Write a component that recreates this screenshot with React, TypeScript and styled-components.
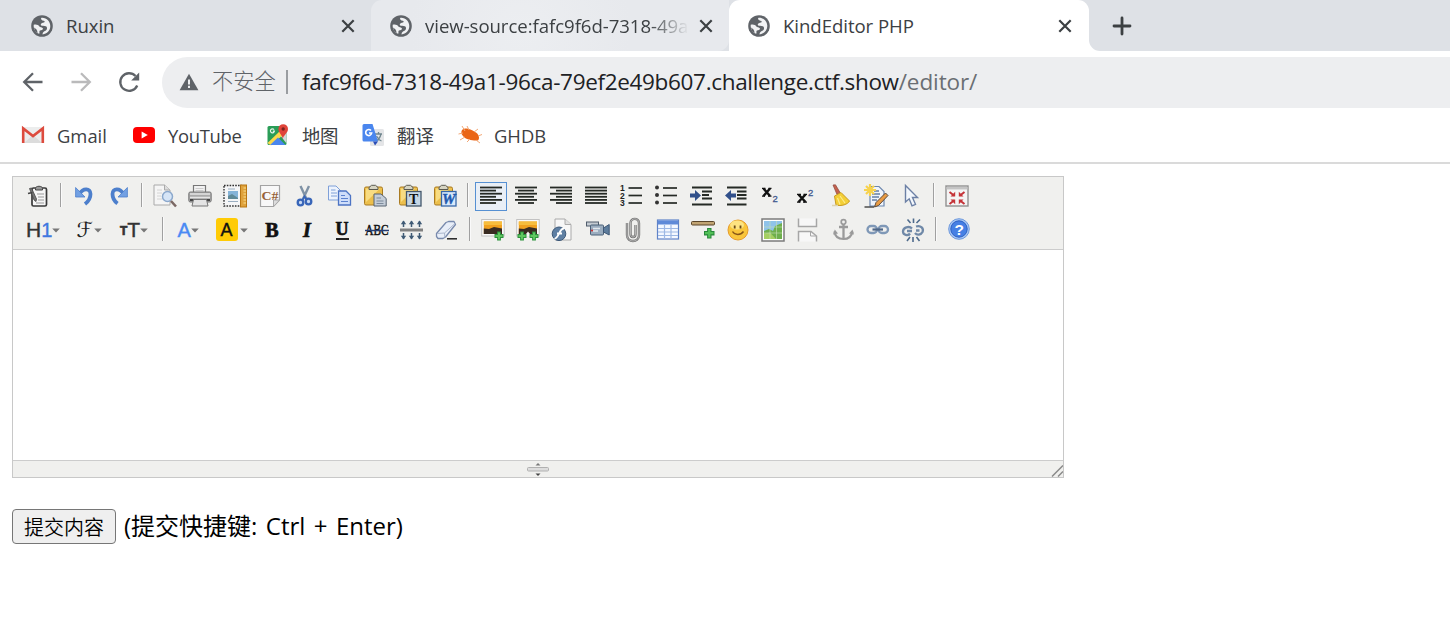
import React from 'react';
import styled, { createGlobalStyle } from 'styled-components';

const GlobalStyle = createGlobalStyle`
  * { box-sizing: border-box; }
  body { margin: 0; background: #fff; overflow: hidden; font-family: "Open Sans", "Noto Sans CJK SC", sans-serif; }
`;

const Window = styled.div`
  width: 1450px;
  height: 637px;
  background: #fff;
  overflow: hidden;
`;

/* ---------- browser chrome ---------- */

const TabStrip = styled.div`
  display: flex;
  height: 51px;
  background: #dee1e6;
`;

const Tab = styled.div<{ $w: number; $kind: 'idle' | 'hover' | 'active' }>`
  display: flex;
  align-items: center;
  width: ${p => p.$w}px;
  height: 51px;
  padding: 0 ${p => (p.$kind === 'active' ? 16 : 15)}px 0 ${p => (p.$kind === 'idle' ? 30 : 18)}px;
  border-radius: ${p => (p.$kind === 'hover' ? '11px 0 11px 0' : p.$kind === 'active' ? '11px 11px 0 0' : '0')};
  background: ${p =>
    p.$kind === 'idle'
      ? '#dee1e6'
      : p.$kind === 'hover'
        ? 'radial-gradient(circle at 150px 30px, #eceef1 0, #e7e9ed 110px)'
        : '#fff'};
`;

const TabTitle = styled.div<{ $fade?: boolean }>`
  flex: 1;
  min-width: 0;
  margin-left: 12px;
  margin-right: 9px;
  overflow: hidden;
  white-space: nowrap;
  font-size: 18.6px;
  line-height: 26px;
  letter-spacing: -0.05px;
  color: #3c4043;
  ${p => p.$fade && 'mask-image: linear-gradient(to right, #000 calc(100% - 40px), transparent);'}
`;

const NewTab = styled.div`
  display: flex;
  align-items: center;
  flex: 1;
  padding-left: 23px;
  border-radius: 0 0 0 11px;
  background: #dee1e6;
`;

const Corner = styled.div`
  flex: 1;
  display: flex;
  background: linear-gradient(#dee1e6 30px, #fff 30px);
`;

const NavBar = styled.div`
  display: flex;
  align-items: center;
  height: 62px;
  padding-left: 19px;
`;

const NavIcon = styled.span<{ $gap: number }>`
  display: flex;
  margin-right: ${p => p.$gap}px;
`;

const Omnibox = styled.div`
  display: flex;
  align-items: center;
  flex: 1;
  height: 51px;
  padding-left: 17px;
  border-radius: 26px 0 0 26px;
  background: #edeef0;
  white-space: nowrap;
`;

const NotSecure = styled.span`
  width: 74px;
  margin-left: 13px;
  font-size: 21.2px;
  line-height: 28px;
  padding-bottom: 2px;
  font-weight: 300;
  color: #5f6368;
`;

const Divider = styled.span`
  width: 2px;
  height: 24px;
  margin-right: 14px;
  background: #9a9da1;
`;

const Url = styled.span<{ $dim?: boolean; $ls: number }>`
  font-size: 22.5px;
  line-height: 30px;
  letter-spacing: ${p => p.$ls}px;
  color: ${p => (p.$dim ? '#6a6e73' : '#202124')};
`;

const BookmarkBar = styled.div`
  display: flex;
  align-items: center;
  height: 51px;
  padding: 0 0 6px 21px;
  border-bottom: 2px solid #dadada;
`;

const Bookmark = styled.div<{ $w: number; $gap: number }>`
  display: flex;
  align-items: center;
  gap: ${p => p.$gap}px;
  width: ${p => p.$w}px;
  white-space: nowrap;
`;

const BookmarkText = styled.span<{ $ls?: number }>`
  font-size: 18.4px;
  line-height: 26px;
  letter-spacing: ${p => p.$ls ?? 0}px;
  color: #3c4043;
  padding-top: 2px;
`;

/* ---------- editor ---------- */

const Page = styled.div`
  padding: 12px 0 0 12px;
`;

const Editor = styled.div`
  width: 1052px;
  height: 302px;
  border: 1px solid #c8c8c8;
  display: flex;
  flex-direction: column;
`;

const Toolbar = styled.div`
  height: 73px;
  padding: 5px 0 0 9px;
  border-bottom: 1px solid #ccc;
  background: #f0f0ee;
`;

const ToolRow = styled.div`
  display: flex;
  height: 34px;
`;

const Tool = styled.div<{ $w?: number; $on?: boolean }>`
  display: flex;
  align-items: center;
  justify-content: center;
  width: ${p => (p.$w ?? 24) + 8}px;
  height: 29px;
  margin-right: 3px;
  padding-bottom: 2px;
  border: 1px solid ${p => (p.$on ? '#5690d2' : 'transparent')};
  background: ${p => (p.$on ? '#e9eff6' : 'transparent')};
`;

const Separator = styled.div`
  width: 2px;
  height: 24px;
  margin: 1px 6px 0 3px;
  border-left: 1px solid #a0a0a0;
  border-right: 1px solid #fafafa;
`;

const Canvas = styled.div`
  flex: 1;
  background: #fff;
`;

const StatusBar = styled.div`
  display: flex;
  justify-content: center;
  align-items: center;
  position: relative;
  height: 17px;
  border-top: 1px solid #ccc;
  background: #f0f0ee;
`;

const Grip = styled.span`
  position: absolute;
  right: 0;
  bottom: 0;
  display: flex;
`;

const SubmitRow = styled.div`
  display: flex;
  align-items: center;
  margin-top: 31px;
  height: 35px;
`;

const Submit = styled.button`
  width: 104px;
  height: 35px;
  padding: 1px 0 0;
  border: 1px solid #767676;
  border-radius: 4px;
  background: #efefef;
  color: #000;
  font: 350 20px/30px "Noto Sans CJK SC", sans-serif;
`;

const Hint = styled.span`
  margin-left: 8px;
  padding-bottom: 2px;
  font-size: 24px;
  line-height: 34px;
  word-spacing: 2.2px;
  color: #000;
  white-space: nowrap;
`;

/* ---------- chrome icons ---------- */

const Globe = () => (
  <svg width="24" height="24" viewBox="-12 -12 24 24">
    <circle r="10.8" fill="#5f6368" />
    <path d="M-.5 -8.2C4.500 -8.600 8.300 -4.500 8.300 0C8.300 4.500 5 7.800 .500 8.400C.500 6.500 2 5.500 3.500 4.800C5.500 3.500 5.500 .800 3.800 .200C2.500 -.300 -.500 .300 -1.200 -1C-1.600 -2.500 .500 -3 2 -3.400C3.200 -4 2.800 -5 1.500 -5.200C.500 -5.500 -2 -6.500 -.500 -8.200Z" fill="#f1f2f4" />
    <path d="M-8.300 -1.200C-6 -2 -3.500 -1.200 -2.800 .200C-2.200 1.500 .300 1 1 2.400C1.400 3.800 -1 4.200 -2 4.400C-3.200 4.800 -2 6.500 -2.800 7.800C-6.500 6.500 -8.600 3 -8.300 -1.200Z" fill="#f1f2f4" />
    <path d="M-8 1.500C-6 2.600 -4.600 4 -4.400 7.200L-7 5Z" fill="#5f6368" />
  </svg>
);

const Close = () => (
  <svg width="16" height="16" viewBox="0 0 16 16">
    <path d="M2.300 2.300 13.700 13.700M13.700 2.300 2.300 13.700" stroke="#3c4043" strokeWidth="2.200" />
  </svg>
);

const Plus = () => (
  <svg width="20" height="20" viewBox="0 0 20 20">
    <path d="M10 2V18M2 10H18" stroke="#3c4043" strokeWidth="2.800" strokeLinecap="round" />
  </svg>
);

const Back = ({ color, flip }: { color: string; flip?: boolean }) => (
  <svg width="28" height="24" viewBox="0 0 28 24">
    <path
      d="M23.500 12H5.500M14 3.200 5.200 12 14 20.800"
      transform={flip ? 'translate(28 0) scale(-1 1)' : undefined}
      fill="none"
      stroke={color}
      strokeWidth="2.300"
    />
  </svg>
);

const Reload = () => (
  <svg width="24" height="24" viewBox="0 0 24 24">
    <path d="M20.200 15.500A8.800 8.800 0 1 1 18.500 6" fill="none" stroke="#5f6368" strokeWidth="2.300" />
    <path d="M22.200 2.500V10.500H14.200Z" fill="#5f6368" />
  </svg>
);

const Warning = () => (
  <svg width="20" height="18" viewBox="0 0 20 18">
    <path d="M10 .800 19.400 17.200H.600Z" fill="#5f6368" />
    <path d="M10 6.400V11.400M10 12.800V15" stroke="#edeef0" strokeWidth="2" />
  </svg>
);

const Gmail = () => (
  <svg width="24" height="24" viewBox="0 0 24 24">
    <rect x="1" y="4" width="22" height="16" rx="1.500" fill="#eceded" />
    <path d="M3 20 12 12 21 20Z" fill="#dcdcdc" />
    <path d="M2.200 20V5.400L12 13 21.800 5.400V20" fill="none" stroke="#dd4b3e" strokeWidth="2.600" />
  </svg>
);

const YouTube = () => (
  <svg width="24" height="24" viewBox="0 0 24 24">
    <rect x="1" y="4" width="22" height="16" rx="4" fill="#f00" />
    <path d="M9.600 8.600V15.400L15.800 12Z" fill="#fff" />
  </svg>
);

const Maps = () => (
  <svg width="24" height="24" viewBox="0 0 24 24">
    <rect x="1.500" y="3" width="19" height="19" rx="1.500" fill="#2a9d57" />
    <path d="M20.500 7V20.500L14 12Z" fill="#d5d8db" />
    <path d="M1.500 20 14 8 18 11 5 22.500Z" fill="#fbd84a" />
    <path d="M4 22 12 14.500 19.500 22Z" fill="#4a86ee" />
    <path d="M16.800 16C16.500 12 12.400 10 12.400 6A4.700 4.700 0 0 1 22 6C22 10 17.500 12 16.800 16Z" fill="#e0443a" />
    <circle cx="17.200" cy="6" r="1.700" fill="#7c2320" />
    <path d="M8 6.600A2 2 0 1 0 8.400 8.200H6.800" fill="none" stroke="#e3f3e8" strokeWidth="1.200" />
  </svg>
);

const Translate = () => (
  <svg width="24" height="24" viewBox="0 0 24 24">
    <rect x="9" y="6" width="14" height="17" rx="1.500" fill="#e4e5e7" />
    <path d="M14 11H21M17.500 9V11M20 11C19 15 17 17 15 18M15.500 13C17 16 19 17.500 20.500 18" fill="none" stroke="#70868f" strokeWidth="1.300" />
    <path d="M3 1H11.500L17 18.500H3A1.500 1.500 0 0 1 1.500 17V2.500A1.500 1.500 0 0 1 3 1Z" fill="#4a86ee" />
    <path d="M12 18.500H17L14 22.500Z" fill="#2b4db6" />
    <path d="M10 7.600A3 3 0 1 0 10.700 10H8" fill="none" stroke="#fff" strokeWidth="1.600" />
  </svg>
);

const Bug = () => (
  <svg width="24" height="24" viewBox="0 0 24 24">
    <path d="M4 7C8 4 12 6 17 9C21 11 22 15 20 17.500C16 18 8 17 5 13C3 11 3 9 4 7Z" fill="#ea6516" />
    <path d="M7 8 4 3M11 7 9 3M16 9 20 6M20 13 24 11.500M5 10 .500 11M7 14 2 17M12 16 9 19M18 17 22 20" stroke="#f3a877" strokeWidth="1" />
  </svg>
);

/* ---------- editor icons, all on a 24px grid ---------- */

const GlyphText = styled.span<{ $size: number; $color?: string; $serif?: boolean; $bold?: boolean; $italic?: boolean }>`
  font-family: ${p => (p.$serif ? '"Liberation Serif"' : '"Liberation Sans"')}, sans-serif;
  font-size: ${p => p.$size}px;
  line-height: 24px;
  font-weight: ${p => (p.$bold ? 700 : 400)};
  font-style: ${p => (p.$italic ? 'italic' : 'normal')};
  color: ${p => p.$color ?? '#333'};
  -webkit-text-stroke: ${p => (p.$bold ? 0.7 : 0.4)}px ${p => p.$color ?? '#333'};
`;

const Script = styled.span`
  font-family: "DejaVu Sans", "DejaVu Serif", serif;
  font-size: 21px;
  line-height: 24px;
  color: #222;
  margin-right: 1px;
`;

const Caret = () => (
  <svg width="8" height="5" viewBox="0 0 8 5">
    <path d="M.2 .400H7.800L4 4.600Z" fill="#777" />
  </svg>
);

const Drop = styled.span<{ $shift?: number }>`
  display: flex;
  align-items: center;
  width: 100%;
  height: 24px;
  padding-left: 3px;
  padding-right: 3px;
  margin-left: ${p => p.$shift ?? 0}px;
  white-space: nowrap;
  & > svg { flex: none; margin-top: 2px; }
`;

const Small = styled.span`
  padding-top: 3px;
  display: flex;
`;

const Highlight = styled.span`
  display: flex;
  justify-content: center;
  width: 22px;
  height: 23px;
  margin-left: 1px;
  margin-right: 2px;
  border-radius: 3px;
  background: #ffcb05;
`;

const Underlined = styled.span`
  height: 21px;
  border-bottom: 2px solid #222;
  line-height: 20px;
  display: flex;
  align-items: center;
`;

const Art = ({ children }: { children: React.ReactNode }) => (
  <svg width="24" height="24" viewBox="0 0 24 24" overflow="visible">
    {children}
  </svg>
);

const lines = (spans: [number, number][]) =>
  spans.map(([a, b], i) => <path key={i} d={`M${a} ${3.5 + i * 3.1}H${b}`} stroke="#252a25" strokeWidth="1.800" />);

const Clip = ({ children }: { children: React.ReactNode }) => (
  <Art>
    <rect x="1.500" y="3" width="18" height="18" rx="1.500" fill="#ecbf4c" stroke="#a97b22" />
    <path d="M3 18 17 4.500H3Z" fill="#f8dc82" />
    <path d="M6 5.500V3.500L8.500 1.300H12.500L15 3.500V5.500Z" fill="#d6d4c2" stroke="#5b5a50" />
    {children}
  </Art>
);

const icons: Record<string, React.ReactNode> = {
  source: (
    <Art>
      <rect x="6" y="4" width="14.500" height="18" rx="1.500" fill="#f6f6f6" stroke="#3a3a3a" strokeWidth="1.700" />
      <path d="M9.500 4.500C9.500 1.500 16.500 1.500 16.500 4.500V6H9.500Z" fill="#999" stroke="#444" />
      <path d="M11 10H18M12 13H18M12 16H18M10 19H18" stroke="#999" />
      <path d="M3.500 4.500 5.500 4 10.500 15 10 17.500 8 16Z" fill="#777" stroke="#444" strokeWidth=".800" />
      <path d="M2 9.500 6.500 8.500" stroke="#444" strokeWidth="1.600" />
    </Art>
  ),
  undo: (
    <Art>
      <path d="M7.500 10C11 3.500 18.500 4 18.500 10C18.500 13 17 17 13 20" fill="none" stroke="#4d7fcc" strokeWidth="3.800" />
      <path d="M3.600 3.500V13H13Z" fill="#72a0e3" stroke="#4d7fcc" strokeWidth=".800" />
    </Art>
  ),
  redo: (
    <Art>
      <path d="M16.500 10C13 3.500 5.500 4 5.500 10C5.500 13 7 17 10.500 19.500" fill="none" stroke="#4d7fcc" strokeWidth="3.800" />
      <path d="M20.400 3.500V13H11Z" fill="#72a0e3" stroke="#4d7fcc" strokeWidth=".800" />
    </Art>
  ),
  preview: (
    <Art>
      <path d="M1 1H11.500L17 6V21H1Z" fill="#f5f5f5" stroke="#aaa" />
      <path d="M11.500 1V6H17" fill="#ddd" stroke="#aaa" />
      <path d="M4 6H9M4 9H9M4 12H8M4 15H9" stroke="#d4d4d4" />
      <circle cx="14.500" cy="12.500" r="5" fill="#d6e5f7" stroke="#8ba8cc" strokeWidth="1.500" />
      <path d="M18 17 23 22.500" stroke="#7b6864" strokeWidth="2.600" />
    </Art>
  ),
  print: (
    <Art>
      <path d="M5.500 9V1.500H17.500V9" fill="#f2f2f2" stroke="#777" strokeWidth="1.200" />
      <path d="M7.500 4.500H15.500M7.500 6.500H15.500" stroke="#ccc" />
      <rect x=".800" y="8" width="22.400" height="10" rx="1.500" fill="#aaa" stroke="#777" />
      <path d="M2 10H22M2 13.500H22" stroke="#e4e4e4" strokeWidth="1.500" />
      <path d="M2 16H22" stroke="#444" strokeWidth="2" />
      <path d="M5.500 15.500H18.500L20 22H4Z" fill="#e4e4e4" stroke="#777" />
    </Art>
  ),
  template: (
    <Art>
      <rect x="1" y="1.500" width="17" height="20.500" fill="#f5f6f7" stroke="#333" strokeWidth="1.400" strokeDasharray="1.600 1.200" />
      <rect x="5" y="7" width="10" height="8" fill="#86b4d8" />
      <path d="M5 12 9 10 15 14V15H5Z" fill="#608a97" />
      <path d="M5 17.500H15M5 5H12" stroke="#9aaec0" />
      <rect x="17.500" y="1" width="6" height="22" fill="#dfa23c" stroke="#b87612" />
      <path d="M20.500 4H23M20.500 7H23M20.500 10H23M20.500 13H23M20.500 16H23M20.500 19H23" stroke="#fbe08f" />
    </Art>
  ),
  code: (
    <Art>
      <path d="M2.500 1.500H21.500V16L15.500 22.500H2.500Z" fill="#f8f8f8" stroke="#a3a3a3" strokeWidth="1.200" />
      <path d="M21 16H15.500V22" fill="#ddd" stroke="#aaa" />
      <text x="3.500" y="15.800" fontSize="13" fontWeight="700" fontFamily="Liberation Serif" fill="#96623a" textLength="17" lengthAdjust="spacingAndGlyphs">C#</text>
    </Art>
  ),
  cut: (
    <Art>
      <path d="M7.500 2 13.500 15M16 2 10 15" stroke="#7f92a5" strokeWidth="2.400" />
      <circle cx="7.500" cy="18.500" r="2.800" fill="#c9d9f2" stroke="#3865b8" strokeWidth="2.300" />
      <circle cx="15.500" cy="17.500" r="2.800" fill="#c9d9f2" stroke="#3865b8" strokeWidth="2.300" />
      <path d="M9.500 16 11.500 12.500 13.500 15.500" fill="none" stroke="#3865b8" strokeWidth="1.800" />
    </Art>
  ),
  copy: (
    <Art>
      <path d="M.5 2H8L12.500 6.500V16H.5Z" fill="#edf3fd" stroke="#7fa0d8" />
      <path d="M3 6H7.500M3 9H9M3 12H9" stroke="#7fa0d8" />
      <path d="M10.500 7H18L22.500 11.500V21H10.500Z" fill="#cfdefa" stroke="#4d74c4" strokeWidth="1.300" />
      <path d="M13 11.500H17M13 14.500H20M13 17.500H20" stroke="#5c82cf" strokeWidth="1.200" />
    </Art>
  ),
  paste: (
    <Clip>
      <path d="M11 10H18L23.200 14.500V22H11Z" fill="#c4cdd8" stroke="#586573" />
      <path d="M13.500 14H18M13.500 17H20.500M13.500 19.500H20.500" stroke="#7d8b9b" />
    </Clip>
  ),
  plain: (
    <Clip>
      <rect x="8.500" y="7.500" width="14.500" height="14.500" fill="#c6d7e5" stroke="#43566a" strokeWidth="1.300" />
      <text x="11" y="19.500" fontSize="14" fontWeight="700" fontFamily="Liberation Serif" fill="#111">T</text>
    </Clip>
  ),
  word: (
    <Clip>
      <rect x="8.500" y="7.500" width="14.500" height="14.500" fill="#d9e9fb" stroke="#3668aa" strokeWidth="1.300" />
      <text x="9" y="19.500" fontSize="14" fontWeight="700" fontStyle="italic" fontFamily="Liberation Serif" fill="#2159ae" stroke="#2159ae" strokeWidth=".400" textLength="13.500" lengthAdjust="spacingAndGlyphs">W</text>
    </Clip>
  ),
  left: <Art>{lines([[1, 23], [1, 17], [1, 23], [1, 17], [1, 23], [1, 17]])}</Art>,
  center: <Art>{lines([[1, 23], [4, 20], [1, 23], [4, 20], [1, 23], [4, 20]])}</Art>,
  right: <Art>{lines([[1, 23], [7, 23], [1, 23], [7, 23], [1, 23], [7, 23]])}</Art>,
  justify: <Art>{lines([[1, 23], [1, 23], [1, 23], [1, 23], [1, 23], [1, 23]])}</Art>,
  ol: (
    <Art>
      {[3.5, 11, 18.5].map((y, i) => (
        <g key={y}>
          <path d={`M9.500 ${y + 0.5}H23`} stroke="#252a25" strokeWidth="1.700" />
          <text x="1" y={y + 3.8} fontSize="8.500" fontWeight="700" fontFamily="Liberation Sans" fill="#222">{i + 1}</text>
        </g>
      ))}
    </Art>
  ),
  ul: (
    <Art>
      {[3.5, 11, 18.5].map(y => (
        <g key={y}>
          <path d={`M9 ${y + 0.5}H23`} stroke="#252a25" strokeWidth="1.700" />
          <circle cx="3" cy={y} r="2" fill="#333" />
        </g>
      ))}
    </Art>
  ),
  indent: (
    <Art>
      <path d="M3 3.500H23M13 7.500H23M13 11H20M13 14.500H23M3 20.500H23" stroke="#252a25" strokeWidth="2" />
      <path d="M1 9.500H6V6L12 11.500 6 17V13.500H1Z" fill="#31508b" />
    </Art>
  ),
  outdent: (
    <Art>
      <path d="M3 3.500H22.500M13 7.500H22.500M13 11H22.500M13 14.500H22.500M3 20.500H22.500" stroke="#252a25" strokeWidth="2" />
      <path d="M12 9.500H7V6L1 11.500 7 17V13.500H12Z" fill="#31508b" />
    </Art>
  ),
  sub: (
    <Art>
      <path d="M4.500 4.500 11 12M11 4.500 4.500 12" stroke="#111" strokeWidth="2.500" />
      <path d="M3 4.300H6.500M9.500 4.300H12.500M3 12.200H6M9 12.200H12.500" stroke="#111" strokeWidth="1.200" />
      <text x="13.500" y="18" fontSize="9.500" fontFamily="Liberation Sans" fill="#41598f" stroke="#41598f" strokeWidth=".300">2</text>
    </Art>
  ),
  sup: (
    <Art>
      <path d="M4.500 10.500 11.500 18M11.500 10.500 4.500 18" stroke="#111" strokeWidth="2.500" />
      <path d="M3 10.300H7M9.500 10.300H13M3 18.200H6.500M9 18.200H13" stroke="#111" strokeWidth="1.200" />
      <text x="14" y="11.500" fontSize="9.500" fontFamily="Liberation Sans" fill="#41598f" stroke="#41598f" strokeWidth=".300">2</text>
    </Art>
  ),
  broom: (
    <Art>
      <path d="M4 1 6.500 .800 11 8.500 8 10.500Z" fill="#c4624e" stroke="#8d463b" strokeWidth=".700" />
      <path d="M5.500 12 12 8.500 20.500 17C19 20.500 12 22.500 7 21Z" fill="#f3cf37" stroke="#c99b1f" />
      <path d="M8.500 14 11 20.500M11 12 16 19" stroke="#fdeb8b" strokeWidth="1.200" />
      <path d="M3 21.500H9" stroke="#ddd3b0" strokeWidth="1.500" />
    </Art>
  ),
  quick: (
    <Art>
      <path d="M6 2.500H15L20 7.500V22H6Z" fill="#eff4fb" stroke="#6d87ae" strokeWidth="1.200" />
      <path d="M8 10H16M8 13H15M8 16H13M10 7H15" stroke="#647da5" strokeWidth="1.300" />
      <path d="M6 0V12M0 6H12M2 2 10 10M10 2 2 10" stroke="#f7d24c" strokeWidth="2.200" />
      <path d="M21.500 9 24 11.500 14.500 21.500 10.500 23 12 18.500Z" fill="#e99b43" stroke="#5c4a3c" />
      <path d="M.500 23H10" stroke="#333" strokeWidth="1.300" />
    </Art>
  ),
  select: (
    <Art>
      <path d="M6.500 1.500V18L10.200 14.800 13 21.800 16.500 20.300 13.500 13.500H18.500Z" fill="#f3f7fc" stroke="#6c80a5" strokeWidth="1.400" />
    </Art>
  ),
  full: (
    <Art>
      <rect x="1" y="2" width="22" height="20" fill="#f4f4f4" stroke="#919191" strokeWidth="1.400" />
      <path d="M1.500 4.200H22.500" stroke="#c4c4c4" strokeWidth="2.500" />
      <g stroke="#c53338" strokeWidth="2">
        <path d="M4.500 8 9 11.500M19.500 8 15 11.500M4.500 20 9 16.500M19.500 20 15 16.500" />
      </g>
      <g fill="#c53338">
        <path d="M10.200 7.800V12.500H5.500ZM13.800 7.800V12.500H18.500ZM10.200 20.200V15.500H5.500ZM13.800 20.200V15.500H18.500Z" />
      </g>
    </Art>
  ),
  strike: (
    <Art>
      <text x=".300" y="16.800" fontSize="15" fontFamily="Liberation Serif" fill="#111" stroke="#111" strokeWidth=".500" textLength="23.200" lengthAdjust="spacingAndGlyphs">ABC</text>
      <path d="M0 12.500H24" stroke="#263e74" strokeWidth="1.500" />
    </Art>
  ),
  lineheight: (
    <Art>
      <path d="M0 12H23" stroke="#808080" strokeWidth="3" />
      {[3.5, 11.5, 19.5].map(x => (
        <g key={x}>
          <path d={`M${x} 3V9M${x} 15V21`} stroke="#3f5a74" strokeWidth="1.500" />
          <path d={`M${x - 2.7} 6.200 ${x} 2.500 ${x + 2.7} 6.200ZM${x - 2.7} 17.800 ${x} 21.500 ${x + 2.7} 17.800Z`} fill="#3f5a74" />
        </g>
      ))}
    </Art>
  ),
  eraser: (
    <Art>
      <path d="M12 20.800H22" stroke="#222" strokeWidth="1.500" />
      <path d="M1.500 15.500 11 4.500 13.500 3.500H19L20.500 6.500 10.500 19 8 20.500H3L1.500 18.500Z" fill="#e8eef8" stroke="#788aad" strokeWidth="1.300" strokeLinejoin="round" />
      <path d="M2 15.500 9.500 15 20 5.500M9.500 15 9.800 19.500" fill="none" stroke="#aab6cc" strokeWidth="1" />
    </Art>
  ),
  flash: (
    <Art>
      <path d="M4 1H14L20 6.500V22H4Z" fill="#f7f7f7" stroke="#aaa" />
      <path d="M14 1V6.500H20" fill="#e2e2e2" stroke="#aaa" />
      <circle cx="8" cy="15.800" r="6.800" fill="#5e7fa3" stroke="#3c5878" />
      <path d="M13 10.500C8 10.500 8.500 19.500 3.500 21M6 15.500H11" fill="none" stroke="#fff" strokeWidth="1.800" />
    </Art>
  ),
  media: (
    <Art>
      <rect x=".500" y="4" width="12" height="4" fill="#c4cbd2" stroke="#505d6c" />
      <rect x="4.500" y="7" width="13" height="10" rx="1" fill="#9badbf" stroke="#4b6078" />
      <path d="M17.500 10 23.200 6.500V17L17.500 14Z" fill="#5e7d9d" stroke="#3e5876" />
      <path d="M7 10.500H14M7 13H12" stroke="#e1e8ee" strokeWidth="1.300" />
      <circle cx="6" cy="12.500" r="1.100" fill="#cc3434" />
    </Art>
  ),
  file: (
    <Art>
      <path d="M6 5V17C6 25 18 25 18 17V5C18 -.500 9.500 -.500 9.500 5V16C9.500 20 14.500 20 14.500 16V7" fill="none" stroke="#777" strokeWidth="2.400" />
      <path d="M6 5V17C6 25 18 25 18 17V5C18 -.500 9.500 -.500 9.500 5V16C9.500 20 14.500 20 14.500 16V7" fill="none" stroke="#d0d0d0" strokeWidth=".700" />
    </Art>
  ),
  table: (
    <Art>
      <rect x="1.500" y="2" width="21" height="19" fill="#f4f8ff" stroke="#5f83c8" strokeWidth="1.200" />
      <rect x="2" y="2.500" width="20" height="4" fill="#5f8ad8" />
      <path d="M2 10.500H22M2 14H22M2 17.500H22M8.500 7V21M15 7V21" stroke="#9db8e4" strokeWidth="1.200" />
    </Art>
  ),
  hr: (
    <Art>
      <rect x=".500" y="3.500" width="23" height="3.500" rx="1" fill="#c1a473" stroke="#5a452a" />
      <path d="M18.300 10V20.500M13 15.200H23.500" stroke="#27873a" strokeWidth="4.400" />
      <path d="M18.300 11V19.500M14 15.200H22.500" stroke="#52c057" strokeWidth="2.300" />
    </Art>
  ),
  emoji: (
    <Art>
      <circle cx="12" cy="12" r="10" fill="#f9c63b" stroke="#e69b2c" />
      <ellipse cx="11" cy="7" rx="7" ry="4.500" fill="#fde381" />
      <path d="M8.700 7.500V10.500M14.500 7.500V10.500" stroke="#6b4a16" strokeWidth="1.800" />
      <path d="M6.500 13.500C9 17.500 14.500 17.500 17.500 13.500" fill="none" stroke="#885617" strokeWidth="1.400" />
    </Art>
  ),
  map: (
    <Art>
      <rect x="1" y="1" width="22" height="22" fill="#fff" stroke="#7b7b7b" strokeWidth="1.500" />
      <rect x="3" y="3" width="18" height="18" fill="#8fc3ea" />
      <path d="M3 13 8 11 12 13 14 8 21 5V21H3Z" fill="#6eaf4d" />
      <path d="M3 15.500 9 14.500 15 21H3Z" fill="#a5cf62" />
      <path d="M9 3V21M15.500 3V21M3 9H21M3 15H21" stroke="#c7dfb7" strokeWidth=".600" />
    </Art>
  ),
  pagebreak: (
    <Art>
      <path d="M2.500 .500V8.500H20.500V.500M2.500 23.500V13.500H15L20.500 18V23.500" fill="#f7f7f7" stroke="#a6a6a6" strokeWidth="1.500" />
      <path d="M14.500 13.500V18H20" fill="none" stroke="#a6a6a6" />
    </Art>
  ),
  anchor: (
    <Art>
      <circle cx="12.500" cy="4" r="2.300" fill="none" stroke="#9a9a9a" strokeWidth="1.700" />
      <path d="M12.500 6.500V21M8 9H17" stroke="#9a9a9a" strokeWidth="2.300" />
      <path d="M3.500 13.500C4 19 8 21 12.500 21C17 21 20.500 19 21.500 13.500" fill="none" stroke="#9a9a9a" strokeWidth="2.200" />
      <path d="M2 16.500 3.800 11.500 7 15.500ZM23 16.500 21.500 11.500 18 15.500Z" fill="#9a9a9a" />
    </Art>
  ),
  link: (
    <Art>
      <rect x="1.500" y="8" width="9.500" height="7" rx="3.500" fill="none" stroke="#7f98b7" strokeWidth="2.300" />
      <rect x="12.500" y="8" width="9.500" height="7" rx="3.500" fill="none" stroke="#7f98b7" strokeWidth="2.300" />
      <path d="M6.500 11.500H17" stroke="#4f6788" strokeWidth="2.200" />
    </Art>
  ),
  unlink: (
    <Art>
      <path d="M11 10.500C8 7.500 2 9.500 2 13.500C2 17 7 18.500 9 15.500M6 13H11M15 8.500C20 7 23 10.500 21.500 14C20 17 16 17.500 14 15M15 12.500H18.500" fill="none" stroke="#7089a8" strokeWidth="2.300" />
      <path d="M6.500 1.500 9.500 5M12.500 .500V5M19 1.500 15.500 5M6 23 9 19M12 19V24M18.500 23 15.500 19" stroke="#4f6b8c" strokeWidth="1.600" />
    </Art>
  ),
  about: (
    <Art>
      <circle cx="12" cy="11" r="10.300" fill="#a9c8f4" stroke="#6e99dd" />
      <circle cx="12" cy="11" r="8.200" fill="#4680e4" stroke="#2a5fc4" />
      <text x="7.500" y="16.600" fontSize="15.500" fontWeight="700" fontFamily="Liberation Sans" fill="#fff">?</text>
    </Art>
  ),
};

const Photo = ({ double }: { double?: boolean }) => (
  <Art>
    <rect x=".700" y="1.500" width="22.500" height="16.500" fill="#fafafa" stroke="#c2c2c2" />
    <rect x="2.800" y="3.500" width="18.200" height="12.500" fill="#f0a01f" />
    <rect x="2.800" y="3.500" width="18.200" height="3.500" fill="#f7bd3d" />
    <path d="M2.800 10.500 8 11 13 9 21 10.500V16H2.800Z" fill="#392b22" />
    {double && <path d="M8 18.500 12 13.500 16 18.500Z" fill="#f7f7f7" />}
    {(double ? [6, 18] : [18]).map(x => (
      <g key={x}>
        <path d={`M${x} 13.500V22.500M${x - 4.5} 18H${x + 4.5}`} stroke="#2c923d" strokeWidth="3.800" />
        <path d={`M${x} 14.500V21.500M${x - 3.5} 18H${x + 3.5}`} stroke="#5fc75f" strokeWidth="2" />
      </g>
    ))}
  </Art>
);

const ToolGroup = ({ names, active }: { names: string[]; active?: string }) => (
  <>
    {names.map(name => (
      <Tool key={name} $on={name === active}>
        {icons[name]}
      </Tool>
    ))}
  </>
);

export default function App() {
  return (
    <Window>
      <GlobalStyle />
      <TabStrip>
        <Tab $w={371} $kind="idle">
          <Globe />
          <TabTitle>Ruxin</TabTitle>
          <Close />
        </Tab>
        <Tab $w={358} $kind="hover">
          <Globe />
          <TabTitle $fade>view-source:fafc9f6d-7318-49a</TabTitle>
          <Close />
        </Tab>
        <Tab $w={360} $kind="active">
          <Globe />
          <TabTitle>KindEditor PHP</TabTitle>
          <Close />
        </Tab>
        <Corner>
          <NewTab>
            <Plus />
          </NewTab>
        </Corner>
      </TabStrip>

      <NavBar>
        <NavIcon $gap={20}><Back color="#5f6368" /></NavIcon>
        <NavIcon $gap={22}><Back color="#bababb" flip /></NavIcon>
        <NavIcon $gap={21}><Reload /></NavIcon>
        <Omnibox>
          <Warning />
          <NotSecure>不安全</NotSecure>
          <Divider />
          <Url $ls={-0.33}>fafc9f6d-7318-49a1-96ca-79ef2e49b607.challenge.ctf.show</Url>
          <Url $ls={-0.1} $dim>/editor/</Url>
        </Omnibox>
      </NavBar>

      <BookmarkBar>
        <Bookmark $w={111} $gap={12}><Gmail /><BookmarkText>Gmail</BookmarkText></Bookmark>
        <Bookmark $w={134} $gap={12}><YouTube /><BookmarkText $ls={-0.3}>YouTube</BookmarkText></Bookmark>
        <Bookmark $w={95} $gap={12}><Maps /><BookmarkText $ls={-0.3}>地图</BookmarkText></Bookmark>
        <Bookmark $w={97} $gap={12}><Translate /><BookmarkText>翻译</BookmarkText></Bookmark>
        <Bookmark $w={110} $gap={12}><Bug /><BookmarkText>GHDB</BookmarkText></Bookmark>
      </BookmarkBar>

      <Page>
        <Editor>
          <Toolbar>
            <ToolRow>
              <ToolGroup names={['source']} />
              <Separator />
              <ToolGroup names={['undo', 'redo']} />
              <Separator />
              <ToolGroup names={['preview', 'print', 'template', 'code', 'cut', 'copy', 'paste', 'plain', 'word']} />
              <Separator />
              <ToolGroup
                active="left"
                names={['left', 'center', 'right', 'justify', 'ol', 'ul', 'indent', 'outdent', 'sub', 'sup', 'broom', 'quick', 'select']}
              />
              <Separator />
              <ToolGroup names={['full']} />
            </ToolRow>
            <ToolRow>
              <Tool $w={37.5}>
                <Drop>
                  <GlyphText $size={21}>H</GlyphText>
                  <GlyphText $size={20} $color="#3f78e0">1</GlyphText>
                  <Caret />
                </Drop>
              </Tool>
              <Tool $w={31.5}>
                <Drop $shift={2}>
                  <Script>ℱ</Script>
                  <Caret />
                </Drop>
              </Tool>
              <Tool $w={34.5}>
                <Drop $shift={3}>
                  <Small><GlyphText $size={12} $bold>T</GlyphText></Small>
                  <GlyphText $size={21}>T</GlyphText>
                  <Caret />
                </Drop>
              </Tool>
              <Separator />
              <Tool $w={30}>
                <Drop $shift={4}>
                  <GlyphText $size={20} $color="#4a8af4">A</GlyphText>
                  <Caret />
                </Drop>
              </Tool>
              <Tool $w={34.5}>
                <Drop>
                  <Highlight><GlyphText $size={18} $color="#111">A</GlyphText></Highlight>
                  <Caret />
                </Drop>
              </Tool>
              <Tool><GlyphText $serif $bold $size={20} $color="#111">B</GlyphText></Tool>
              <Tool><GlyphText $serif $bold $italic $size={20} $color="#111">I</GlyphText></Tool>
              <Tool><Underlined><GlyphText $serif $bold $size={18} $color="#111">U</GlyphText></Underlined></Tool>
              <ToolGroup names={['strike', 'lineheight', 'eraser']} />
              <Separator />
              <Tool><Photo /></Tool>
              <Tool><Photo double /></Tool>
              <ToolGroup names={['flash', 'media', 'file', 'table', 'hr', 'emoji', 'map', 'pagebreak', 'anchor', 'link', 'unlink']} />
              <Separator />
              <ToolGroup names={['about']} />
            </ToolRow>
          </Toolbar>
          <Canvas />
          <StatusBar>
            <svg width="22" height="15" viewBox="0 0 22 15">
              <rect x=".500" y="5.500" width="21" height="3.500" rx="1" fill="#ddd" stroke="#b0b0b0" />
              <path d="M8.500 3.500 11 1 13.500 3.500Z" fill="#777" />
              <path d="M8.500 11.500H13.500L11 14Z" fill="#444" />
            </svg>
            <Grip>
              <svg width="12" height="12" viewBox="0 0 12 12">
                <path d="M1 11.500 12 .500M7 11.500 12 6.500" stroke="#8a8a8a" strokeWidth="1.500" />
              </svg>
            </Grip>
          </StatusBar>
        </Editor>
        <SubmitRow>
          <Submit>提交内容</Submit>
          <Hint>(提交快捷键: Ctrl + Enter)</Hint>
        </SubmitRow>
      </Page>
    </Window>
  );
}
